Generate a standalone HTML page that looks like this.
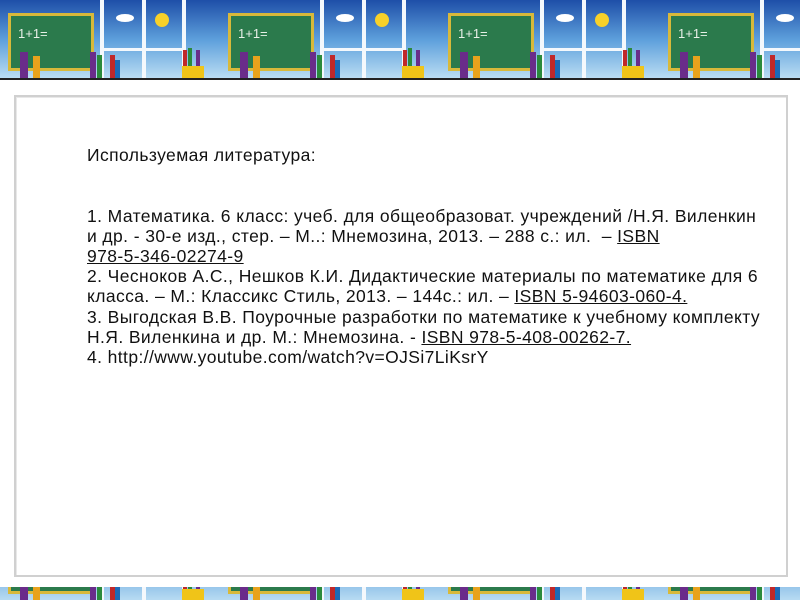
<!DOCTYPE html>
<html><head><meta charset="utf-8"><style>
html,body{margin:0;padding:0;width:800px;height:600px;overflow:hidden;background:#fff;font-family:"Liberation Sans",sans-serif}
.top{position:absolute;left:0;top:0;width:800px;height:80px}
.bot{position:absolute;left:0;top:587px;width:800px;height:13px;overflow:hidden}
.bot svg{position:absolute;left:0;top:-64px}
.frame{position:absolute;left:14px;top:95px;width:770px;height:478px;border:2px solid #d0d0d0;box-shadow:inset 1px 1px 0 #e8e8e8;background:#fff}
.txt{position:absolute;left:87px;top:145px;font-size:17.5px;line-height:20.2px;letter-spacing:0.4px;color:#111;white-space:nowrap}
u{text-decoration:underline}
</style></head><body>
<svg class="top" viewBox="0 0 800 80" width="800" height="80">
<defs>
<linearGradient id="sky" x1="0" y1="0" x2="0" y2="1"><stop offset="0" stop-color="#1e4fa8"/><stop offset="0.5" stop-color="#5ea0dc"/><stop offset="1" stop-color="#bfe0f4"/></linearGradient>
<pattern id="t" width="220" height="80" patternUnits="userSpaceOnUse" x="0">
<rect width="220" height="80" fill="url(#sky)"/>
<rect x="100" y="0" width="4" height="80" fill="#f4f8fc"/>
<rect x="142" y="0" width="4" height="80" fill="#f4f8fc"/>
<rect x="182" y="0" width="4" height="80" fill="#f4f8fc"/>
<rect x="100" y="48" width="86" height="3" fill="#f4f8fc"/>
<circle cx="162" cy="20" r="7" fill="#f7d12a"/>
<ellipse cx="125" cy="18" rx="9" ry="4" fill="#fff"/>
<rect x="8" y="13" width="86" height="58" fill="#d8b93a"/>
<rect x="11" y="16" width="80" height="52" fill="#2b7a4c"/>
<text x="18" y="38" fill="#e8f0e8" font-size="13" font-family="Liberation Sans">1+1=</text>
<rect x="20" y="52" width="8" height="27" fill="#6a2c8a"/>
<rect x="33" y="56" width="7" height="23" fill="#e8a21c"/>
<rect x="90" y="52" width="6" height="27" fill="#6a2c8a"/>
<rect x="97" y="55" width="5" height="24" fill="#2a8a3c"/>
<rect x="110" y="55" width="5" height="24" fill="#c0282a"/>
<rect x="115" y="60" width="5" height="19" fill="#1c6ab8"/>
<rect x="183" y="50" width="4" height="20" fill="#c0282a"/>
<rect x="188" y="48" width="4" height="22" fill="#2a8a3c"/>
<rect x="196" y="50" width="4" height="20" fill="#6a2c8a"/>
<rect x="182" y="66" width="22" height="13" fill="#f0c418"/>
</pattern></defs>
<rect width="800" height="80" fill="url(#t)"/>
<rect y="78" width="800" height="2" fill="#222"/>
</svg>
<div class="frame"></div>
<div class="txt">Используемая литература:<br><br><br>1. Математика. 6 класс: учеб. для общеобразоват. учреждений /Н.Я. Виленкин<br>и др. - 30-е изд., стер. – М..: Мнемозина, 2013. – 288 с.: ил.&nbsp; – <u>ISBN<br>978-5-346-02274-9</u><br>2. Чесноков А.С., Нешков К.И. Дидактические материалы по математике для 6<br>класса. – М.: Классикс Стиль, 2013. – 144с.: ил. – <u>ISBN 5-94603-060-4.</u><br>3. Выгодская В.В. Поурочные разработки по математике к учебному комплекту<br>Н.Я. Виленкина и др. М.: Мнемозина. - <u>ISBN 978-5-408-00262-7.</u><br>4. http://www.youtube.com/watch?v=OJSi7LiKsrY</div>
<div class="bot"><svg viewBox="0 0 800 80" width="800" height="80"><rect width="800" height="80" fill="url(#t)"/></svg></div>
</body></html>
